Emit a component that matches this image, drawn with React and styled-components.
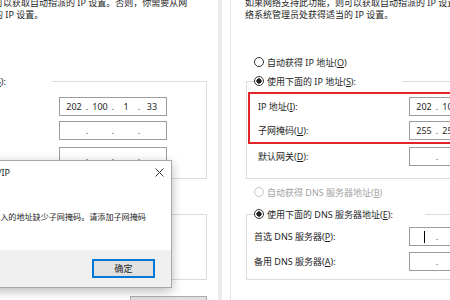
import React from "react";
import styled, { createGlobalStyle } from "styled-components";

const GlobalStyle = createGlobalStyle`
  html, body {
    margin: 0;
    padding: 0;
    background: #fff;
  }
  body {
    font-family: "Noto Sans", "Noto Sans CJK SC", sans-serif;
  }
`;

const Stage = styled.div`
  display: flex;
  width: 450px;
  height: 300px;
  overflow: hidden;
  background: #fff;
  color: #1e1e1e;
  font-size: 9px;
`;

const Viewport = styled.div`
  position: relative;
  flex: none;
  width: ${(p) => p.$w}px;
  height: 300px;
  overflow: hidden;
`;

const Gutter = styled.div`
  flex: none;
  width: 4px;
  background: #ececec;
`;

// the tab page of the properties window, 346px wide
const Page = styled.div`
  width: 346px;
  margin-left: ${(p) => p.$shift}px;
  background: linear-gradient(#e6e6e6, #e6e6e6) 8px 0 / 1px 100% no-repeat;
`;

const Intro = styled.p`
  margin: -3px 0 0 23px;
  line-height: 12px;
  white-space: nowrap;
`;

const Line = styled.span`
  display: block;
`;

const Option = styled.label`
  display: flex;
  align-items: center;
  gap: 3px;
  height: 14px;
  margin: ${(p) => p.$top || 0}px 0 0 ${(p) => p.$left || 0}px;
  color: ${(p) => (p.$disabled ? "#a3a3a3" : "#1e1e1e")};
  white-space: nowrap;
`;

const Dot = styled.span`
  flex: none;
  width: 10px;
  height: 10px;
  box-sizing: border-box;
  border-radius: 50%;
  border: 1px solid ${(p) => (p.$disabled ? "#c4c4c4" : "#333")};
  background: ${(p) =>
    p.$on ? "radial-gradient(circle, #222 0 2.4px, #fff 2.9px)" : "#fff"};
`;

const Group = styled.fieldset`
  min-width: 0;
  width: 311px;
  box-sizing: border-box;
  margin: ${(p) => p.$top}px 0 0 24px;
  padding: ${(p) => p.$padTop || 0}px 0 ${(p) => p.$padBottom}px;
  border: 1px solid #dcdcdc;
`;

const Legend = styled.legend`
  width: ${(p) => p.$w}px;
  margin-left: 7px;
  padding: 0;
`;

const Mark = styled.div`
  margin: 4px 0 0 1px;
  border: 2px solid ${(p) => (p.$on ? "#e3242b" : "transparent")};
`;

const Field = styled.div`
  display: grid;
  grid-template-columns: ${(p) => 187 - p.$start}px 108px;
  align-items: center;
  height: ${(p) => p.$h || 24}px;
  padding-left: ${(p) => p.$indent}px;
  white-space: nowrap;
`;

const IpBox = styled.div`
  display: flex;
  align-items: center;
  width: 108px;
  height: 19px;
  box-sizing: border-box;
  padding: 0 3px;
  border: 1px solid #9c9c9c;
  background: #fff;
`;

const Seg = styled.span`
  width: 22px;
  text-align: center;
`;

const Sep = styled.span`
  width: 4px;
  text-align: center;
  color: #444;
`;

const Caret = styled.span`
  display: inline-block;
  width: 1px;
  height: 12px;
  vertical-align: middle;
  background: #000;
`;

const BottomRow = styled.div`
  display: flex;
  justify-content: space-between;
  align-items: flex-start;
  width: 299px;
  margin: 16px 0 0 36px;
`;

const Check = styled.span`
  display: inline-block;
  width: 9px;
  height: 9px;
  margin-top: 2px;
  box-sizing: border-box;
  border: 1px solid #333;
`;

const CheckText = styled.span`
  margin-top: 4px;
`;

const PushButton = styled.button`
  width: 77px;
  height: 20px;
  padding: 0;
  border: 1px solid #adadad;
  background: #e1e1e1;
  font: inherit;
  color: #1e1e1e;
`;

const MsgBox = styled.div`
  position: absolute;
  left: -66px;
  top: 160px;
  width: 238px;
  box-sizing: border-box;
  display: flex;
  flex-direction: column;
  background: #fff;
  border: 1px solid #a8a8a8;
  box-shadow: 0 3px 10px rgba(0, 0, 0, 0.28);
`;

const TitleBar = styled.div`
  display: flex;
  align-items: center;
  justify-content: space-between;
  height: 22px;
  padding: 0 7px 0 5px;
  white-space: nowrap;
`;

const MsgBody = styled.div`
  display: flex;
  align-items: center;
  height: 67px;
  padding-left: 49px;
  font-size: 8.1px;
  white-space: nowrap;
`;

const MsgButtons = styled.div`
  display: flex;
  align-items: center;
  justify-content: flex-end;
  height: 37px;
  padding-right: 16px;
  background: #f0f0f0;
`;

const OkButton = styled.button`
  width: 63px;
  height: 19px;
  padding: 0;
  border: 2px solid #0078d7;
  background: #e1e1e1;
  font: inherit;
  font-size: 9px;
  color: #1e1e1e;
`;

function IpInput({ value = ["", "", "", ""], caret }) {
  return (
    <IpBox>
      {value.map((v, i) => (
        <React.Fragment key={i}>
          {i > 0 && <Sep>.</Sep>}
          <Seg>{i === 0 && caret ? <Caret /> : v}</Seg>
        </React.Fragment>
      ))}
    </IpBox>
  );
}

function Radio({ on, disabled, children, ...rest }) {
  return (
    <Option $disabled={disabled} {...rest}>
      <Dot $on={on} $disabled={disabled} />
      <span>{children}</span>
    </Option>
  );
}

function TcpPage({ shift, highlight, mask, caret }) {
  return (
    <Page $shift={shift}>
      <Intro>
        <Line>如果网络支持此功能，则可以获取自动指派的 IP 设置。否则，你需要从网</Line>
        <Line>络系统管理员处获得适当的 IP 设置。</Line>
      </Intro>

      <Radio $top={34} $left={32}>
        自动获得 IP 地址(<u>O</u>)
      </Radio>

      <Group $top={5} $padBottom={10}>
        <Legend $w={148}>
          <Radio on>
            使用下面的 IP 地址(<u>S</u>):
          </Radio>
        </Legend>
        <Mark $on={highlight}>
          <Field $start={36} $indent={8}>
            <span>
              IP 地址(<u>I</u>):
            </span>
            <IpInput value={["202", "100", "1", "33"]} />
          </Field>
          <Field $start={36} $indent={8}>
            <span>
              子网掩码(<u>U</u>):
            </span>
            <IpInput value={mask} />
          </Field>
        </Mark>
        <Field $start={36} $indent={11}>
          <span>
            默认网关(<u>D</u>):
          </span>
          <IpInput />
        </Field>
      </Group>

      <Radio disabled $top={6} $left={32}>
        自动获得 DNS 服务器地址(<u>B</u>)
      </Radio>

      <Group $top={8} $padTop={3} $padBottom={5}>
        <Legend $w={171}>
          <Radio on>
            使用下面的 DNS 服务器地址(<u>E</u>):
          </Radio>
        </Legend>
        <Field $start={32} $indent={7} $h={25}>
          <span>
            首选 DNS 服务器(<u>P</u>):
          </span>
          <IpInput caret={caret} />
        </Field>
        <Field $start={32} $indent={7} $h={25}>
          <span>
            备用 DNS 服务器(<u>A</u>):
          </span>
          <IpInput />
        </Field>
      </Group>

      <BottomRow>
        <Option>
          <Check />
          <CheckText>
            退出时验证设置(<u>L</u>)
          </CheckText>
        </Option>
        <PushButton>
          高级(<u>V</u>)...
        </PushButton>
      </BottomRow>
    </Page>
  );
}

function CloseIcon() {
  return (
    <svg width="9" height="9" viewBox="0 0 9 9">
      <path d="M0.5 0.5 L8.5 8.5 M8.5 0.5 L0.5 8.5" stroke="#333" strokeWidth="1" />
    </svg>
  );
}

export default function App() {
  return (
    <>
      <GlobalStyle />
      <Stage>
        <Viewport $w={218}>
          <TcpPage shift={-128} mask={["", "", "", ""]} />
          <MsgBox>
            <TitleBar>
              <span>Microsoft TCP/IP</span>
              <CloseIcon />
            </TitleBar>
            <MsgBody>您输入的地址缺少子网掩码。请添加子网掩码</MsgBody>
            <MsgButtons>
              <OkButton>确定</OkButton>
            </MsgButtons>
          </MsgBox>
        </Viewport>
        <Gutter />
        <Viewport $w={228}>
          <TcpPage shift={0} highlight caret mask={["255", "255", "255", "0"]} />
        </Viewport>
      </Stage>
    </>
  );
}
